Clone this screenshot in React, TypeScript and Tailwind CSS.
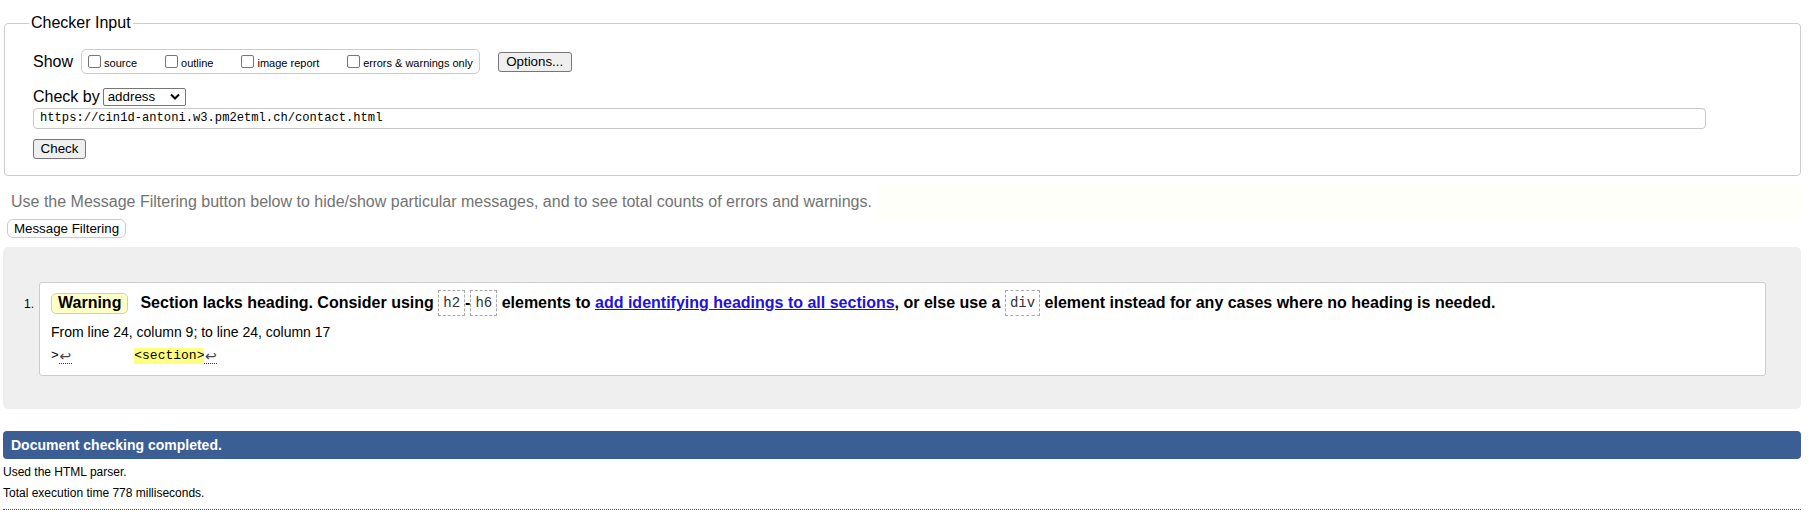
import React from "react";

const opts = ["source", "outline", "image report", "errors & warnings only"];

function Code({ children }: { children: React.ReactNode }) {
  return (
    <span className="flex h-[26px] items-center border border-dashed border-[#a8a8a8] px-[4px] font-['Liberation_Mono','DejaVu_Sans_Mono',monospace] text-[14px] font-normal leading-[17px] text-[#333333]">
      {children}
    </span>
  );
}

function Lf() {
  return (
    <span className="inline-block h-[16px] w-[13px] overflow-hidden border-b border-dotted border-[#333333] text-center font-['DejaVu_Sans',sans-serif] text-[14px] leading-[16px] text-[#444444]">
      ↩
    </span>
  );
}

export default function App() {
  return (
    <div className="min-h-[532px] w-full bg-white pl-[3px] pr-[18px] pt-[14px] font-['Liberation_Sans',Arial,sans-serif] text-black">
      <fieldset className="ml-[1px] rounded-[4px] border border-[#cccccc] pb-[16px] pl-[28px] pr-[28px] pt-[17px]">
        <legend className="-ml-[4px] px-[2px] text-[16px] leading-[18px]">Checker Input</legend>

        <div className="flex h-[25px] items-center">
          <span className="text-[16px] leading-[18px]">Show</span>
          <div className="ml-[8px] flex h-[25px] items-center rounded-[5px] border border-[#cccccc] px-[6px]">
            {opts.map((o, i) => (
              <label key={o} className={i < 3 ? "mr-[28px] flex items-center" : "flex items-center"}>
                <span className="h-[13px] w-[13px] rounded-[2px] border border-[#767676] bg-white" />
                <span className="ml-[3px] mt-[4px] text-[11px] leading-[13px]">{o}</span>
              </label>
            ))}
          </div>
          <button className="ml-[18px] flex h-[20px] w-[74px] items-center justify-center rounded-[3px] border border-[#767676] bg-[#efefef] text-[13.33px] leading-[16px]">
            Options...
          </button>
        </div>

        <div className="mt-[13px] flex h-[19px] items-center">
          <span className="text-[16px] leading-[18px]">Check by</span>
          <div className="ml-[3px] flex h-[18px] w-[83px] items-center justify-between rounded-[2px] border border-[#767676] bg-white pl-[4px] pr-[5px]">
            <span className="text-[13.33px] leading-[16px]">address</span>
            <svg width="10" height="7" viewBox="0 0 10 7" fill="none">
              <path d="M1 1.5l4 4 4-4" stroke="#000" strokeWidth="2" />
            </svg>
          </div>
        </div>

        <div className="mt-[2px] flex h-[21px] w-[1673px] items-center rounded-[4px] border border-[#c8c8c8] pl-[6px]">
          <span className="font-['Liberation_Mono',monospace] text-[12.15px] leading-[15px]">
            https://cin1d-antoni.w3.pm2etml.ch/contact.html
          </span>
        </div>

        <div className="mt-[10px] flex h-[20px]">
          <button className="flex h-[20px] w-[53px] items-center justify-center rounded-[3px] border border-[#767676] bg-[#efefef] text-[13.33px] leading-[16px]">
            Check
          </button>
        </div>
      </fieldset>

      <div className="mt-[8px] flex h-[35px]">
        <p className="ml-[8px] mt-[9px] self-start text-[16px] leading-[18px] text-[#737373]">
          Use the Message Filtering button below to hide/show particular messages, and to see total counts of errors and warnings.
        </p>
        <div className="ml-[6px] flex-1 bg-[#fffffa]" />
      </div>

      <div className="flex">
        <button className="ml-[4px] flex h-[19px] w-[119px] items-center justify-center rounded-[6px] border border-[#cccccc] bg-[#fdfdfd] text-[13.33px] leading-[16px]">
          Message Filtering
        </button>
      </div>

      <div className="mt-[9px] flex items-start rounded-[5px] bg-[#efefef] pb-[33px] pl-[21px] pr-[35px] pt-[35px]">
        <span className="mt-[15px] w-[15px] text-[12px] leading-[15px]">1.</span>
        <div className="flex-1 rounded-[3px] border border-[#cccccc] bg-white pb-[11px] pl-[11px] pt-[7px]">
          <div className="flex h-[26px] items-center whitespace-pre text-[16px] font-bold leading-[18px]">
            <span className="flex h-[21px] items-center rounded-[5px] border border-[#cfcfb8] bg-[#ffffc8] px-[6px]">Warning</span>
            <span className="ml-[12px]">Section lacks heading. Consider using </span>
            <Code>h2</Code>
            <span>-</span>
            <Code>h6</Code>
            <span> elements to </span>
            <span className="text-[#2211dd] underline">add identifying headings to all sections</span>
            <span>, or else use a </span>
            <Code>div</Code>
            <span> element instead for any cases where no heading is needed.</span>
          </div>
          <p className="mt-[7px] text-[14px] leading-[18px]">From line 24, column 9; to line 24, column 17</p>
          <div className="mt-[7px] flex h-[16px] items-start whitespace-pre font-['Liberation_Mono','DejaVu_Sans_Mono',monospace] text-[13px] leading-[16px]">
            <span>&gt;</span>
            <Lf />
            <span>{"        "}</span>
            <span className="bg-[#ffff80]">&lt;section&gt;</span>
            <Lf />
          </div>
        </div>
      </div>

      <div className="mt-[22px] flex h-[28px] items-center rounded-[4px] bg-[#3b5e94] pl-[8px]">
        <span className="text-[14px] font-bold leading-[17px] text-white">Document checking completed.</span>
      </div>
      <p className="mt-[6px] text-[12px] leading-[15px]">Used the HTML parser.</p>
      <p className="mt-[6px] text-[12px] leading-[15px]">Total execution time 778 milliseconds.</p>
      <div className="mt-[8px] border-t border-dotted border-[#555555]" />
    </div>
  );
}
